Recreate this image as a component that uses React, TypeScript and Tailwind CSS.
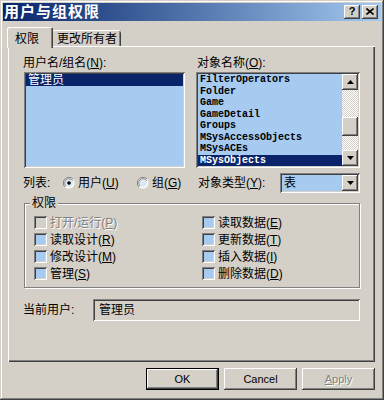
const frame = 'shadow-[inset_-1px_-1px_#404040,inset_1px_1px_#d4d0c8,inset_-2px_-2px_#808080,inset_2px_2px_#ffffff]'
const raised = 'shadow-[inset_-1px_-1px_#404040,inset_1px_1px_#ffffff,inset_-2px_-2px_#808080,inset_2px_2px_#d4d0c8]'
const sunken = 'shadow-[inset_1px_1px_#808080,inset_-1px_-1px_#ffffff,inset_2px_2px_#404040,inset_-2px_-2px_#d4d0c8]'

const objects = ['FilterOperators', 'Folder', 'Game', 'GameDetail', 'Groups', 'MSysAccessObjects', 'MSysACEs', 'MSysObjects']

function Key({ k }: { k: string }) {
    return <span>(<u>{k}</u>)</span>
}

function Arrow({ up }: { up?: boolean }) {
    return (
        <svg width="7" height="4" viewBox="0 0 7 4">
            <polygon points={up ? '3.5,0 7,4 0,4' : '0,0 7,0 3.5,4'} fill="#000" />
        </svg>
    )
}

function Scrollbar() {
    return (
        <div className="w-[16px] h-full flex flex-col [background:repeating-conic-gradient(#ffffff_0_25%,#d4d0c8_0_50%)_0_0/2px_2px]">
            <div className={`h-[16px] bg-[#d4d0c8] ${raised} flex items-center justify-center`}>
                <Arrow up />
            </div>
            <div className={`mt-[27px] h-[19px] bg-[#d4d0c8] ${raised}`} />
            <div className="flex-1" />
            <div className={`h-[16px] bg-[#d4d0c8] ${raised} flex items-center justify-center`}>
                <Arrow />
            </div>
        </div>
    )
}

function Radio({ checked, label, k, w }: { checked?: boolean; label: string; k: string; w: string }) {
    return (
        <div className={`flex items-center ${w}`}>
            <svg width="12" height="12" viewBox="0 0 12 12">
                <circle cx="6" cy="6" r="5.5" fill="#ffffff" />
                <path d="M10 2 A5.5 5.5 0 0 0 2 10" stroke="#808080" strokeWidth="1" fill="none" />
                <circle cx="6" cy="6" r="4.3" fill="#dde8f4" stroke="#404040" strokeWidth="0.6" strokeDasharray="14 14" strokeDashoffset="-10" />
                {checked && <circle cx="6" cy="6" r="1.8" fill="#000" />}
            </svg>
            <span className="ml-[3px]">{label}<Key k={k} /></span>
        </div>
    )
}

function Check({ label, k, disabled }: { label: string; k: string; disabled?: boolean }) {
    return (
        <div className="flex items-center h-[17px]">
            <span className={`w-[13px] h-[13px] ${sunken} ${disabled ? 'bg-[#d4d0c8]' : 'bg-[#a6caf0]'}`} />
            <span className={`ml-[3px] ${disabled ? 'text-[#808080] [text-shadow:1px_1px_#ffffff]' : ''}`}>
                {label}<Key k={k} />
            </span>
        </div>
    )
}

function Btn({ children, def, disabled }: { children: React.ReactNode; def?: boolean; disabled?: boolean }) {
    return (
        <button
            className={`w-[73px] h-[22px] bg-[#d4d0c8] text-[11px] flex items-center justify-center ${
                def
                    ? 'border border-black shadow-[inset_-1px_-1px_#404040,inset_1px_1px_#ffffff,inset_-2px_-2px_#808080]'
                    : raised
            } ${disabled ? 'text-[#808080] [text-shadow:1px_1px_#ffffff]' : 'text-black'}`}
        >
            {children}
        </button>
    )
}

export default function App() {
    return (
        <div className={`w-[384px] h-[400px] p-[3px] bg-[#d4d0c8] flex flex-col ${frame} font-[family-name:'Liberation_Sans','Noto_Sans_CJK_SC',sans-serif] text-[12px] leading-[14px] text-black`}>
            {/* title bar */}
            <div className="h-[18px] flex items-center justify-between bg-linear-to-r from-[#0a246a] to-[#a6caf0] pl-[1px] pr-[3px]">
                <span className="text-white font-bold text-[15px] leading-[18px] tracking-[1px]">用户与组权限</span>
                <div className="flex gap-[2px]">
                    <div className={`w-[16px] h-[14px] bg-[#d4d0c8] ${raised} flex items-center justify-center text-[11px] font-bold leading-none pb-[1px]`}>?</div>
                    <div className={`w-[16px] h-[14px] bg-[#d4d0c8] ${raised} flex items-center justify-center pb-[1px]`}>
                        <svg width="8" height="7" viewBox="0 0 8 7">
                            <path d="M0.5 0.5 L7.5 6.5 M7.5 0.5 L0.5 6.5" stroke="#000" strokeWidth="1.6" />
                        </svg>
                    </div>
                </div>
            </div>

            {/* tabs */}
            <div className="mt-[6px] ml-[4px] h-[19px] flex items-end">
                <div className="relative z-10 w-[46px] h-[21px] -mb-[2px] bg-[#d4d0c8] rounded-t-[2px] shadow-[inset_1px_1px_#ffffff,inset_-1px_0_#404040,inset_-2px_0_#808080] pl-[8px] pt-[5px]">
                    权限
                </div>
                <div className="w-[68px] h-[16px] bg-[#d4d0c8] rounded-t-[2px] shadow-[inset_0_1px_#ffffff,inset_-1px_0_#404040,inset_-2px_0_#808080] pl-[4px] pt-[2px]">
                    更改所有者
                </div>
            </div>

            {/* tab panel */}
            <div className="ml-[5px] w-[367px] h-[316px] shadow-[inset_1px_1px_#ffffff,inset_-1px_-1px_#404040,inset_-2px_-2px_#808080] pt-[10px] pl-[15px] flex flex-col">
                <div className="flex">
                    <div className="w-[162px] flex flex-col">
                        <span className="h-[14px]">用户名/组名<Key k="N" />:</span>
                        <div className={`mt-[2px] ml-[1px] w-[161px] h-[96px] bg-[#a6caf0] ${sunken} p-[2px]`}>
                            <div className="h-[12px] bg-[#0a246a] text-white leading-[12px] pl-[2px]">管理员</div>
                        </div>
                    </div>
                    <div className="ml-[11px] w-[164px] flex flex-col">
                        <span className="h-[14px] pl-[1px]">对象名称<Key k="O" />:</span>
                        <div className={`mt-[2px] w-[164px] h-[96px] bg-[#a6caf0] ${sunken} p-[2px] flex`}>
                            <div className="flex-1 flex flex-col font-[family-name:'Liberation_Mono',monospace] font-bold text-[10px]">
                                {objects.map((o, i) => (
                                    <div
                                        key={o}
                                        className={`h-[11.5px] leading-[11.5px] pl-[2px] ${i === objects.length - 1 ? 'bg-[#0a246a] text-white' : ''}`}
                                    >
                                        {o}
                                    </div>
                                ))}
                            </div>
                            <Scrollbar />
                        </div>
                    </div>
                </div>

                <div className="mt-[5px] h-[20px] flex items-center">
                    <div className="w-[173px] flex items-center">
                        <span className="w-[40px]">列表:</span>
                        <Radio checked label="用户" k="U" w="w-[74px]" />
                        <Radio label="组" k="G" w="w-[59px]" />
                    </div>
                    <span className="w-[84px] pl-[2px]">对象类型<Key k="Y" />:</span>
                    <div className={`w-[80px] h-[20px] bg-[#a6caf0] ${sunken} p-[2px] flex items-center`}>
                        <span className="flex-1 pl-[2px]">表</span>
                        <div className={`w-[16px] h-[16px] bg-[#d4d0c8] ${raised} flex items-center justify-center`}>
                            <Arrow />
                        </div>
                    </div>
                </div>

                <div className="mt-[10px] ml-[1px] w-[336px] border border-[#808080] shadow-[inset_1px_1px_#ffffff,1px_1px_#ffffff] pb-[5px] flex flex-col">
                    <span className="-mt-[8px] ml-[5px] w-fit px-[2px] bg-[#d4d0c8]">权限</span>
                    <div className="mt-[4px] pl-[9px] flex">
                        <div className="w-[168px] flex flex-col">
                            <Check label="打开/运行" k="P" disabled />
                            <Check label="读取设计" k="R" />
                            <Check label="修改设计" k="M" />
                            <Check label="管理" k="S" />
                        </div>
                        <div className="flex flex-col">
                            <Check label="读取数据" k="E" />
                            <Check label="更新数据" k="T" />
                            <Check label="插入数据" k="I" />
                            <Check label="删除数据" k="D" />
                        </div>
                    </div>
                </div>

                <div className="mt-[11px] flex items-center">
                    <span className="w-[70px]">当前用户:</span>
                    <div className={`w-[267px] h-[22px] ${sunken} flex items-center pl-[6px]`}>管理员</div>
                </div>
            </div>

            {/* buttons */}
            <div className="mt-[6px] pr-[6px] flex justify-end gap-[5px]">
                <Btn def>OK</Btn>
                <Btn>Cancel</Btn>
                <Btn disabled><u>A</u>pply</Btn>
            </div>
        </div>
    )
}
